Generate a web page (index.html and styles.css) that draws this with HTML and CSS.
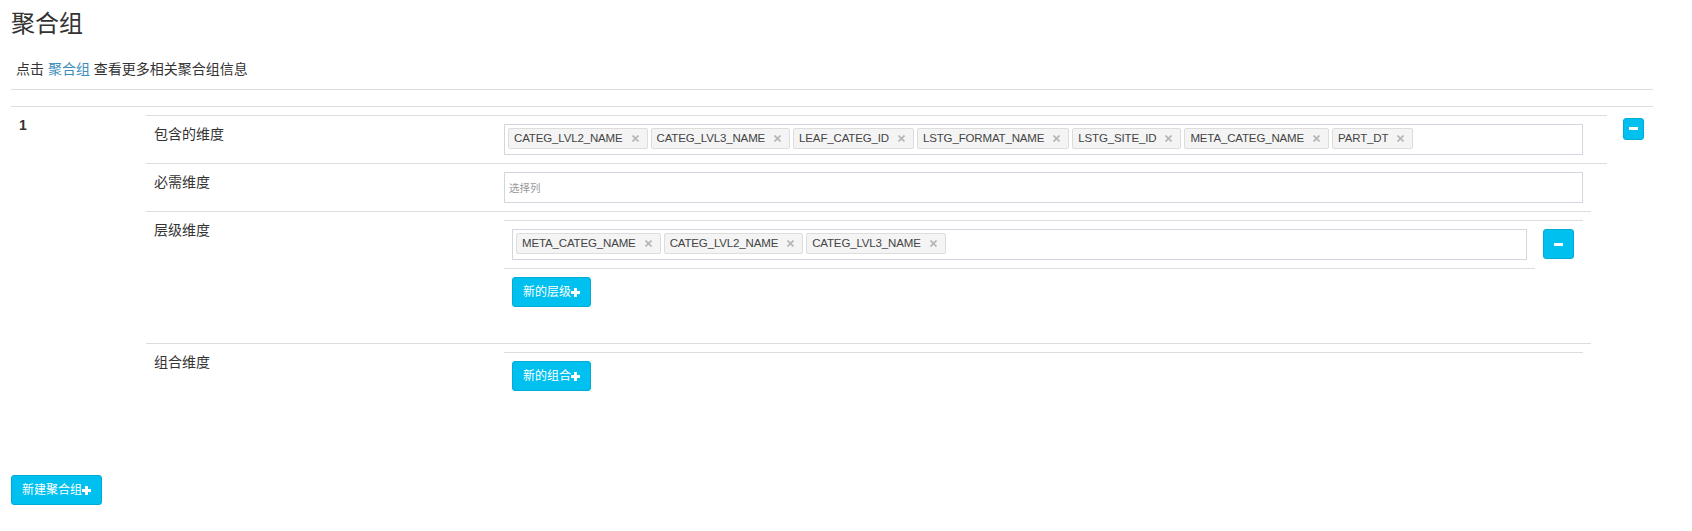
FILE: index.html
```html
<!DOCTYPE html>
<html lang="zh-CN">
<head>
<meta charset="utf-8">
<title>聚合组</title>
<link rel="stylesheet" href="styles.css">
</head>
<body>
<div class="page">
  <h3 class="title">聚合组</h3>
  <p class="hint">点击 <a href="#">聚合组</a> 查看更多相关聚合组信息</p>

  <div class="groups">
    <div class="groups-head"></div>
    <div class="group">
      <div class="idx">1</div>
      <div class="group-body">
        <div class="dims">
          <div class="cell dim-label">包含的维度</div>
          <div class="cell dim-value">
            <div class="select">
              <span class="tag">CATEG_LVL2_NAME<svg class="x" width="7" height="7" viewBox="0 0 7 7"><path d="M0.5 0.5L6.5 6.5M6.5 0.5L0.5 6.5"/></svg></span>
              <span class="tag">CATEG_LVL3_NAME<svg class="x" width="7" height="7" viewBox="0 0 7 7"><path d="M0.5 0.5L6.5 6.5M6.5 0.5L0.5 6.5"/></svg></span>
              <span class="tag">LEAF_CATEG_ID<svg class="x" width="7" height="7" viewBox="0 0 7 7"><path d="M0.5 0.5L6.5 6.5M6.5 0.5L0.5 6.5"/></svg></span>
              <span class="tag">LSTG_FORMAT_NAME<svg class="x" width="7" height="7" viewBox="0 0 7 7"><path d="M0.5 0.5L6.5 6.5M6.5 0.5L0.5 6.5"/></svg></span>
              <span class="tag">LSTG_SITE_ID<svg class="x" width="7" height="7" viewBox="0 0 7 7"><path d="M0.5 0.5L6.5 6.5M6.5 0.5L0.5 6.5"/></svg></span>
              <span class="tag">META_CATEG_NAME<svg class="x" width="7" height="7" viewBox="0 0 7 7"><path d="M0.5 0.5L6.5 6.5M6.5 0.5L0.5 6.5"/></svg></span>
              <span class="tag">PART_DT<svg class="x" width="7" height="7" viewBox="0 0 7 7"><path d="M0.5 0.5L6.5 6.5M6.5 0.5L0.5 6.5"/></svg></span>
            </div>
          </div>
          <div class="cell dim-pad"></div>

          <div class="cell dim-label">必需维度</div>
          <div class="cell dim-value">
            <div class="input"><span class="placeholder">选择列</span></div>
          </div>
          <div class="cell dim-pad"></div>

          <div class="cell dim-label">层级维度</div>
          <div class="cell dim-value">
            <div class="hier">
              <div class="cell hier-main">
                <div class="select">
                  <span class="tag">META_CATEG_NAME<svg class="x" width="7" height="7" viewBox="0 0 7 7"><path d="M0.5 0.5L6.5 6.5M6.5 0.5L0.5 6.5"/></svg></span>
                  <span class="tag">CATEG_LVL2_NAME<svg class="x" width="7" height="7" viewBox="0 0 7 7"><path d="M0.5 0.5L6.5 6.5M6.5 0.5L0.5 6.5"/></svg></span>
                  <span class="tag">CATEG_LVL3_NAME<svg class="x" width="7" height="7" viewBox="0 0 7 7"><path d="M0.5 0.5L6.5 6.5M6.5 0.5L0.5 6.5"/></svg></span>
                </div>
              </div>
              <div class="cell hier-act">
                <button class="btn btn-sm-icon" type="button"><svg width="9" height="3" viewBox="0 0 9 3"><rect width="9" height="3" fill="#fff"/></svg></button>
              </div>
              <div class="cell hier-main">
                <button class="btn" type="button">新的层级<svg width="9" height="9" viewBox="0 0 9 9"><path d="M3 0h3v3h3v3H6v3H3V6H0V3h3z" fill="#fff"/></svg></button>
              </div>
            </div>
          </div>

          <div class="cell dim-label">组合维度</div>
          <div class="cell dim-value">
            <div class="combo">
              <div class="cell">
                <button class="btn" type="button">新的组合<svg width="9" height="9" viewBox="0 0 9 9"><path d="M3 0h3v3h3v3H6v3H3V6H0V3h3z" fill="#fff"/></svg></button>
              </div>
            </div>
          </div>
        </div>
      </div>
      <div class="group-act">
        <button class="btn btn-xs-icon" type="button"><svg width="9" height="3" viewBox="0 0 9 3"><rect width="9" height="3" fill="#fff"/></svg></button>
      </div>
    </div>
  </div>

  <button class="btn" type="button">新建聚合组<svg width="9" height="9" viewBox="0 0 9 9"><path d="M3 0h3v3h3v3H6v3H3V6H0V3h3z" fill="#fff"/></svg></button>
</div>
</body>
</html>
```

FILE: styles.css
```css
* { box-sizing: border-box; }

body {
  margin: 0;
  background: #fff;
  color: #333;
  font-family: "Liberation Sans", "Noto Sans CJK SC", sans-serif;
  font-size: 14px;
  line-height: 20px;
}

.page {
  width: 1642px;
  margin-left: 11px;
}

.title {
  margin: 11px 0 0;
  font-size: 24px;
  line-height: 26px;
  font-weight: normal;
  color: #333;
}

.hint {
  margin: 22px 0 10px 5px;
  font-size: 14px;
  line-height: 20px;
}

.hint a {
  color: #3c8dbc;
  text-decoration: none;
}

.groups {
  margin-bottom: 20px;
}

.groups-head {
  height: 17px;
  border-top: 1px solid #ddd;
}

.group {
  display: grid;
  grid-template-columns: 127px 1fr 38px;
  border-top: 1px solid #ddd;
}

.group > div {
  padding: 8px;
}

.idx {
  font-weight: bold;
}

.cell {
  border-top: 1px solid #ddd;
  padding: 8px;
}

.dims {
  display: grid;
  grid-template-columns: 350px 1095px 16px;
  margin-bottom: 20px;
}

.dim-label {
  grid-column: 1;
}

.dim-value {
  grid-column: 2;
}

.dim-pad {
  grid-column: 3;
}

.select {
  display: flex;
  flex-wrap: wrap;
  align-content: flex-start;
  gap: 3px;
  height: 31px;
  padding: 3px;
  border: 1px solid #d2d6de;
  background: #fff;
}

.tag {
  display: inline-flex;
  align-items: center;
  height: 21px;
  padding: 0 8px 0 5px;
  border: 1px solid #ddd;
  border-radius: 2px;
  background: #f4f4f4;
  color: #444;
  font-size: 11.5px;
  letter-spacing: -0.15px;
  line-height: 19px;
  white-space: nowrap;
}

.tag .x {
  margin-left: 9px;
  stroke: #b5b5b5;
  stroke-width: 1.6;
  fill: none;
}

.input {
  display: flex;
  align-items: center;
  height: 31px;
  padding: 0 4px;
  border: 1px solid #d2d6de;
}

.placeholder {
  font-size: 10.5px;
  color: #999;
}

.hier {
  display: grid;
  grid-template-columns: 1031px 48px;
  margin-bottom: 20px;
}

.hier-main {
  grid-column: 1;
}

.hier-act {
  grid-column: 2;
}

.combo {
  margin-bottom: 20px;
}

.btn {
  display: inline-flex;
  align-items: center;
  height: 30px;
  margin: 0;
  padding: 0 10px;
  border: 1px solid #00acd6;
  border-radius: 3px;
  background: #00c0ef;
  color: #fff;
  font-family: inherit;
  font-size: 12px;
  line-height: 18px;
  cursor: pointer;
}

.btn svg {
  display: block;
}

.btn-sm-icon {
  width: 31px;
  justify-content: center;
  padding: 0;
}

.btn-xs-icon {
  width: 21px;
  height: 22px;
  justify-content: center;
  padding: 0;
}
```
